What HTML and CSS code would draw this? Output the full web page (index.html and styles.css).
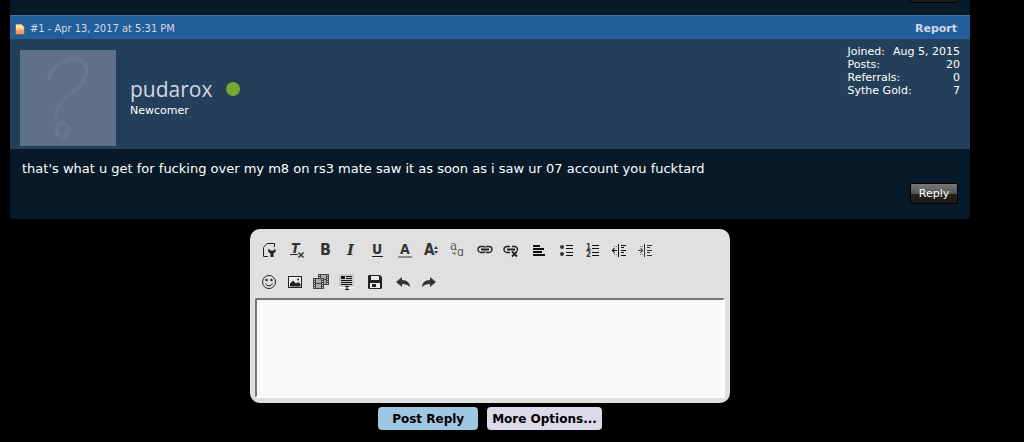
FILE: index.html
```html
<!DOCTYPE html>
<html lang="en">
<head>
    <meta charset="UTF-8">
    <meta name="viewport" content="width=device-width, initial-scale=1.0">
    <title>Thread</title>
    <link rel="stylesheet" href="styles.css">
</head>
<body>
    <main>
        <!-- end of the previous message -->
        <div class="previous"><div class="previous-edge"></div></div>

        <article class="message">
            <header class="message-bar">
                <svg class="post-icon" width="12" height="12" viewBox="0 0 12 12" aria-hidden="true">
                    <defs>
                        <linearGradient id="paper" x1="0" y1="0" x2="0" y2="1">
                            <stop offset="0.3" stop-color="#fbe9a0"/>
                            <stop offset="0.7" stop-color="#f79a62"/>
                        </linearGradient>
                    </defs>
                    <path d="M1.500 1h6l3 3v7.500h-9z" fill="url(#paper)" stroke="#6b5a50" stroke-width="0.800"/>
                </svg>
                <a href="#post1" class="post-link">#1 - Apr 13, 2017 at 5:31 PM</a>
                <a href="#report" class="report">Report</a>
            </header>

            <section class="user">
                <svg class="avatar" width="96" height="96" viewBox="0 0 96 96" role="img" aria-label="avatar">
                    <rect width="96" height="96" fill="#5e7186"/>
                    <g fill="none" stroke="#65788f" stroke-linecap="round" stroke-linejoin="round">
                        <path stroke-width="4" d="M29 28C33 14 46 8 56 9C68 11 69 24 62 33C54 43 39 48 35 66"/>
                        <path stroke-width="4" d="M38 74C34 80 37 87 42 88C48 86 50 77 45 74C43 72 40 73 40 75"/>
                    </g>
                </svg>
                <div class="user-text">
                    <h3><a href="#pudarox">pudarox</a><span class="online"></span></h3>
                    <p class="user-title">Newcomer</p>
                </div>
                <dl class="stats">
                    <div><dt>Joined:</dt><dd>Aug 5, 2015</dd></div>
                    <div><dt>Posts:</dt><dd>20</dd></div>
                    <div><dt>Referrals:</dt><dd>0</dd></div>
                    <div><dt>Sythe Gold:</dt><dd>7</dd></div>
                </dl>
            </section>

            <div class="message-body" id="post1">
                <p>that's what u get for fucking over my m8 on rs3 mate saw it as soon as i saw ur 07 account you fucktard</p>
                <button type="button" class="reply">Reply</button>
            </div>
        </article>

        <form class="quick-reply">
            <div class="editor">
                <div class="toolbar">
                    <div class="group">
                        <button type="button" aria-label="Use BB Code Editor"><svg viewBox="0 0 26 26">
                            <path d="M12 19.500H7.500V10.500L11 6.500h7.500V10" fill="none" stroke="#222"/>
                            <path d="M13 11.500c-2 2-.5 4.500 1.500 4.800V20h3v-3.700c2-.3 3-3 1.300-4.800l-.8 2h-4z" fill="#222"/>
                        </svg></button>
                    </div>
                    <div class="group">
                        <button type="button" aria-label="Remove Formatting"><svg viewBox="0 0 26 26">
                            <text x="7" y="16" font-size="14" font-style="italic">T</text>
                            <path d="M6 17.500h8" stroke="#222"/>
                            <path d="M14.500 15.500l5 5M19.500 15.500l-5 5" stroke="#333" stroke-width="1.500"/>
                        </svg></button>
                    </div>
                    <div class="group">
                        <button type="button" aria-label="Bold"><svg viewBox="0 0 26 26"><text x="8" y="18" font-size="16">B</text></svg></button>
                        <button type="button" aria-label="Italic"><svg viewBox="0 0 26 26"><text class="serif" x="9" y="18" font-size="15" font-style="italic">I</text></svg></button>
                        <button type="button" aria-label="Underline"><svg viewBox="0 0 26 26">
                            <text x="8" y="17" font-size="14">U</text>
                            <path d="M8 19.500h11" stroke="#222"/>
                        </svg></button>
                    </div>
                    <div class="group">
                        <button type="button" aria-label="Text Color"><svg viewBox="0 0 26 26">
                            <text x="8" y="17" font-size="14">A</text>
                            <path d="M6 20h14" stroke="#8c8c8c" stroke-width="2"/>
                        </svg></button>
                        <button type="button" aria-label="Font Size"><svg viewBox="0 0 26 26">
                            <text x="6" y="18" font-size="15">A</text>
                            <path d="M16 12l2-3 2 3zM16 14l2 3 2-3z" fill="#444"/>
                        </svg></button>
                        <button type="button" aria-label="Font Family"><svg viewBox="0 0 26 26" class="light">
                            <text class="serif" x="6" y="13" font-size="12">a</text>
                            <text x="13" y="19" font-size="12">ɑ</text>
                            <path d="M8.500 15v1.500h3M10 15l2 1.500-2 1.500" fill="none" stroke="#888"/>
                        </svg></button>
                    </div>
                    <div class="group">
                        <button type="button" aria-label="Link"><svg viewBox="0 0 26 26">
                            <g fill="none" stroke="#222" stroke-width="1.400">
                                <path d="M12 9.500H9a3 3 0 0 0 0 6h3M14 9.500h3a3 3 0 0 1 0 6h-3"/>
                                <path d="M9 12.500h8" stroke-width="2"/>
                                <path d="M12 9.500l1.500 1M12 15.500l1.500-1"/>
                            </g>
                        </svg></button>
                        <button type="button" aria-label="Unlink"><svg viewBox="0 0 26 26">
                            <g fill="none" stroke="#222" stroke-width="1.400">
                                <path d="M12 9.500H9a3 3 0 0 0 0 6h3M14 9.500h3a3 3 0 0 1 2 4.500"/>
                                <path d="M9 12.500h8" stroke-width="2"/>
                                <path d="M14 14.500l5 5M19 14.500l-5 5" stroke-width="1.800"/>
                            </g>
                        </svg></button>
                    </div>
                    <div class="group">
                        <button type="button" aria-label="Alignment"><svg viewBox="0 0 26 26">
                            <path d="M7 9h7M7 12h11M7 15h9M7 18h12" stroke="#111" stroke-width="2"/>
                        </svg></button>
                    </div>
                    <div class="group">
                        <button type="button" aria-label="Unordered List"><svg viewBox="0 0 26 26">
                            <circle cx="8" cy="10" r="2" fill="#333"/><circle cx="8" cy="17" r="2" fill="#333"/>
                            <path d="M12 8.500h7M12 11.500h7M12 15.500h7M12 18.500h7" stroke="#111"/>
                        </svg></button>
                        <button type="button" aria-label="Ordered List"><svg viewBox="0 0 26 26">
                            <text x="6" y="13" font-size="8">1</text><text x="6" y="20" font-size="8">2</text>
                            <path d="M12 8.500h7M12 11.500h7M12 15.500h7M12 18.500h7" stroke="#111"/>
                        </svg></button>
                        <button type="button" aria-label="Outdent"><svg viewBox="0 0 26 26">
                            <path d="M12.500 7v13M15 8.500h5M15 10.500h3M15 13.500h5M15 15.500h3M15 18.500h5" fill="none" stroke="#111"/>
                            <path d="M6 13.500h5M8.500 11l-2 2.500 2 2.500" fill="none" stroke="#111" stroke-width="1.200"/>
                            <path d="M8 9.500h4M8 17.500h4" stroke="#777" stroke-dasharray="1 1"/>
                        </svg></button>
                        <button type="button" aria-label="Indent"><svg viewBox="0 0 26 26">
                            <path d="M12.500 7v13M15 8.500h5M15 10.500h3M15 13.500h5M15 15.500h3M15 18.500h5" fill="none" stroke="#333"/>
                            <path d="M6 13.500h5M8.500 11l2 2.500-2 2.500" fill="none" stroke="#444" stroke-width="1.200"/>
                            <path d="M8 9.500h4M8 17.500h4" stroke="#777" stroke-dasharray="1 1"/>
                        </svg></button>
                    </div>
                </div>
                <div class="toolbar">
                    <div class="group">
                        <button type="button" aria-label="Smilies"><svg viewBox="0 0 26 26">
                            <circle cx="13" cy="13" r="6.500" fill="none" stroke="#222"/>
                            <path d="M9.500 14.500c1 3 6 3 7 0" fill="none" stroke="#222"/>
                            <circle cx="10.500" cy="11" r="1.200" fill="#222"/><circle cx="15.500" cy="11" r="1.200" fill="#222"/>
                        </svg></button>
                        <button type="button" aria-label="Image"><svg viewBox="0 0 26 26">
                            <rect x="6.500" y="7.500" width="13" height="11" fill="#eee" stroke="#222"/>
                            <path d="M8 17.500v-3l3-3 3 3 2-1.500 2.500 2v2.500z" fill="#222"/><circle cx="16" cy="10.500" r="1" fill="#222"/>
                        </svg></button>
                        <button type="button" aria-label="Media"><svg viewBox="0 0 26 26">
                            <path d="M10 5h11v11H10z" fill="#444"/>
                            <path d="M13 6h5v4h-5zM13 11h5v4h-5z" fill="#aaa"/>
                            <path d="M19.500 6v9M11.500 6v9" stroke="#ccc" stroke-dasharray="1 1"/>
                            <path d="M5 9h11v11H5z" fill="#444"/>
                            <path d="M8 10h5v4H8zM8 15h5v4H8z" fill="#aaa"/>
                            <path d="M6.500 10v9M14.500 10v9" stroke="#ccc" stroke-dasharray="1 1"/>
                        </svg></button>
                        <button type="button" aria-label="Insert"><svg viewBox="0 0 26 26">
                            <path d="M5 5h15v13H5z" fill="#c8c8c8"/>
                            <path d="M7 7h4v3H7z" fill="#111"/>
                            <path d="M12 7.500h6M12 9.500h6M7 11.500h11M7 13.500h11M7 15.500h11" stroke="#111"/>
                            <path d="M5 18.500h15" stroke="#fff"/>
                            <path d="M11 17.500h4M13 17v4M11 20.500h4" fill="none" stroke="#111"/>
                        </svg></button>
                    </div>
                    <div class="group">
                        <button type="button" aria-label="Drafts"><svg viewBox="0 0 26 26">
                            <path d="M6 7l1-1h11l2 2v11l-1 1H7l-1-1z" fill="#222"/>
                            <path d="M9 7h8v4H9zM8 14h10v5H8z" fill="#eee"/><path d="M10 15h4v3h-4z" fill="#222"/>
                        </svg></button>
                    </div>
                    <div class="group">
                        <button type="button" aria-label="Undo"><svg viewBox="0 0 26 26">
                            <path d="M6 13l6-5v3c5 0 8 3 8 7-2-2-4-3-8-3v3z" fill="#333"/>
                        </svg></button>
                        <button type="button" aria-label="Redo"><svg viewBox="0 0 26 26">
                            <path d="M20 13l-6-5v3c-5 0-8 3-8 7 2-2 4-3 8-3v3z" fill="#333"/>
                        </svg></button>
                    </div>
                </div>
                <textarea aria-label="Message"></textarea>
            </div>
            <div class="actions">
                <button type="submit" class="primary">Post Reply</button>
                <button type="button">More Options...</button>
            </div>
        </form>
    </main>
</body>
</html>
```

FILE: styles.css
```css
* {
    box-sizing: border-box;
}

body {
    margin: 0;
    background-color: #000;
    color: #fff;
    font-family: Verdana, "DejaVu Sans", sans-serif;
    font-size: 11px;
}

a {
    color: #d3d7e8;
    text-decoration: none;
}

p, h3, dl, dd {
    margin: 0;
}

button {
    font-family: inherit;
    cursor: pointer;
}

main {
    margin: 0 54px 0 10px;
}

.previous {
    display: flex;
    justify-content: flex-end;
    padding: 0 12px 12px;
    background-color: #081a28;
}

.previous-edge {
    width: 48px;
    height: 3px;
    background-color: #1c1c1c;
    border: 1px solid #000;
    border-top: 0;
    border-radius: 0 0 2px 2px;
}

.message {
    background-color: #081a28;
    border-radius: 0 0 3px 3px;
}

.message-bar {
    display: flex;
    align-items: center;
    height: 24px;
    padding: 2px 13px 0 4px;
    background-color: #215f9a;
    border-top: 1px solid #3f73ad;
}

.post-link {
    margin-left: 4px;
    font-family: Tahoma, "DejaVu Sans Condensed", "DejaVu Sans", sans-serif;
}

.report {
    margin-left: auto;
    font-weight: bold;
}

.user {
    display: flex;
    align-items: flex-start;
    padding: 11px 10px 3px;
    background-color: #243f5a;
}

.avatar {
    display: block;
}

.user-text {
    flex: 1;
    padding: 25px 14px 0;
}

.user-text h3 {
    display: flex;
    align-items: center;
    gap: 14px;
    font-family: "Open Sans", sans-serif;
    font-size: 21px;
    line-height: 28px;
    font-weight: normal;
}

.online {
    width: 14px;
    height: 14px;
    border-radius: 50%;
    background-color: #77a832;
}

.user-title {
    line-height: 15px;
}

.stats {
    line-height: 13px;
    margin-top: -5px;
}

.stats div {
    display: flex;
    justify-content: space-between;
    gap: 8px;
}

.message-body {
    display: flex;
    flex-direction: column;
    padding: 11px 12px 15px;
}

.message-body p {
    font-size: 13px;
    line-height: 18px;
}

.reply {
    align-self: flex-end;
    width: 48px;
    height: 21px;
    margin-top: 5px;
    padding: 0;
    border: 1px solid #000;
    border-radius: 2px;
    background: linear-gradient(#777, #555 50%, #222 50%, #1a1a1a);
    color: #fff;
    font-size: 11px;
}

.quick-reply {
    max-width: 480px;
    margin: 10px auto 0;
}

.editor {
    padding: 8px 5px 5px;
    background-color: #e0e0e0;
    border-radius: 10px;
}

.toolbar {
    display: flex;
    gap: 2px;
    margin: 0 1px 6px;
}

.toolbar + .toolbar {
    margin-bottom: 3px;
}

.group {
    display: flex;
}

.group button {
    width: 26px;
    height: 26px;
    padding: 0;
    border: 0;
    background: none;
}

.group svg {
    display: block;
    font-family: "DejaVu Sans Condensed", "DejaVu Sans", sans-serif;
    font-weight: bold;
    fill: #333;
}

.group .light {
    font-weight: normal;
    fill: #555;
}

.group .serif {
    font-family: "DejaVu Serif", serif;
}

textarea {
    display: block;
    width: 100%;
    height: 100px;
    border: 2px solid;
    border-color: #767676 #fff #fff #767676;
    border-radius: 2px;
    background-color: #fafafa;
    resize: none;
}

.actions {
    display: flex;
    justify-content: center;
    gap: 9px;
    padding-top: 4px;
}

.actions button {
    height: 23px;
    padding: 0 5px;
    border: 0;
    border-radius: 4px;
    background-color: #dcdaea;
    color: #000;
    font-size: 12px;
    font-weight: bold;
}

.actions .primary {
    padding: 0 14px;
    background-color: #9fc7e3;
}
```
